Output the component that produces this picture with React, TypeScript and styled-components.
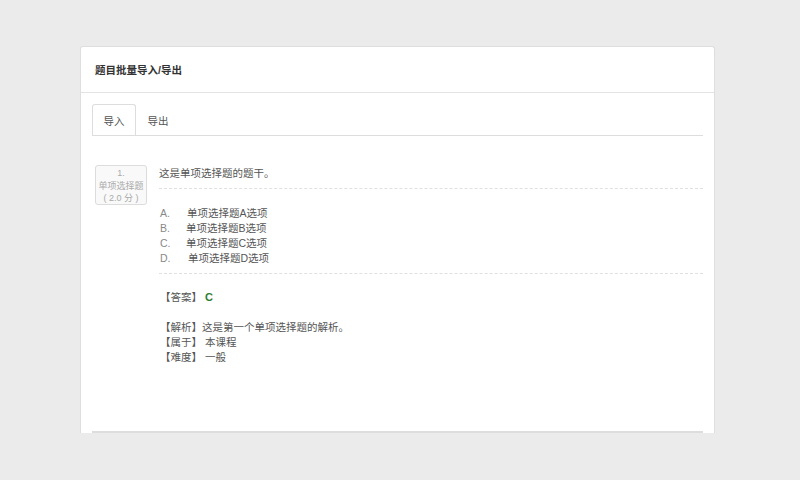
import React from 'react'
import styled, { createGlobalStyle } from 'styled-components'

const GlobalStyle = createGlobalStyle`
  html, body {
    margin: 0;
    padding: 0;
    background: #ebebeb;
    font-family: "Liberation Sans", "Noto Sans CJK SC", sans-serif;
  }
`

const Page = styled.div`
  width: 800px;
  height: 480px;
  padding: 46px 0 0 80px;
  box-sizing: border-box;
  overflow: hidden;
`

const Card = styled.div`
  width: 635px;
  height: 387px;
  background: #fff;
  border: 1px solid #dedede;
  border-bottom: none;
  border-radius: 3px 3px 0 0;
  box-sizing: border-box;
  display: flex;
  flex-direction: column;
`

const CardHeader = styled.div`
  height: 45px;
  line-height: 46px;
  padding-left: 14px;
  border-bottom: 1px solid #e3e3e3;
  font-size: 10.5px;
  font-weight: bold;
  color: #333;
`

const CardBody = styled.div`
  flex: 1;
  padding: 11px 11px 0 11px;
  display: flex;
  flex-direction: column;
`

const TabBar = styled.div`
  display: flex;
  height: 31px;
  border-bottom: 1px solid #dddddd;
`

const Tab = styled.div<{ $active?: boolean }>`
  width: 44px;
  height: ${p => (p.$active ? '31px' : '30px')};
  box-sizing: border-box;
  display: flex;
  align-items: center;
  justify-content: center;
  font-size: 10.5px;
  color: #555;
  background: #fff;
  border: 1px solid ${p => (p.$active ? '#dddddd' : 'transparent')};
  border-bottom: none;
  border-radius: 3px 3px 0 0;
  margin-bottom: ${p => (p.$active ? '-1px' : '0')};
  padding-top: 1px;
`

const Question = styled.div`
  display: flex;
  margin-top: 29px;
  margin-left: 3px;
  font-size: 10.5px;
  color: #555;
`

const Badge = styled.div`
  width: 52px;
  height: 40px;
  box-sizing: border-box;
  border: 1px solid #dcdcdc;
  border-radius: 3px;
  background: #f9f9f9;
  color: #aaa;
  font-size: 9px;
  line-height: 12.5px;
  text-align: center;
  padding-top: 1px;
  flex-shrink: 0;
`

const Content = styled.div`
  flex: 1;
  margin-left: 12px;
`

const Stem = styled.div`
  line-height: 15px;
  padding: 1px 0 7px;
  border-bottom: 1px dashed #e0e0e0;
`

const Options = styled.div`
  padding: 17px 0 7px 1px;
  border-bottom: 1px dashed #e0e0e0;
`

const Option = styled.div`
  display: flex;
  line-height: 15px;
`

const OptionKey = styled.span<{ $pad?: number }>`
  width: ${p => 27 + (p.$pad || 0)}px;
  color: #888;
`

const Details = styled.div`
  padding: 16px 0 0 1px;
  line-height: 15px;
`

const Line = styled.div<{ $gap?: boolean }>`
  margin-bottom: ${p => (p.$gap ? '15px' : '0')};
`

const AnswerValue = styled.span`
  color: #2f7d32;
  font-weight: bold;
  font-size: 11px;
  margin-left: 3px;
`

const Footer = styled.div`
  margin-top: auto;
  height: 2px;
  background: #dddddd;
`

const options = [
  { key: 'A.', text: '单项选择题A选项', pad: 0 },
  { key: 'B.', text: '单项选择题B选项', pad: -1 },
  { key: 'C.', text: '单项选择题C选项', pad: -1 },
  { key: 'D.', text: '单项选择题D选项', pad: 1 },
]

export default function App() {
  return (
    <Page>
      <GlobalStyle />
      <Card>
        <CardHeader>题目批量导入/导出</CardHeader>
        <CardBody>
          <TabBar>
            <Tab $active>导入</Tab>
            <Tab>导出</Tab>
          </TabBar>
          <Question>
            <Badge>
              1.
              <br />
              单项选择题
              <br />( 2.0 分 )
            </Badge>
            <Content>
              <Stem>这是单项选择题的题干。</Stem>
              <Options>
                {options.map(o => (
                  <Option key={o.key}>
                    <OptionKey $pad={o.pad}>{o.key}</OptionKey>
                    <span>{o.text}</span>
                  </Option>
                ))}
              </Options>
              <Details>
                <Line $gap>
                  【答案】<AnswerValue>C</AnswerValue>
                </Line>
                <Line>【解析】这是第一个单项选择题的解析。</Line>
                <Line>【属于】 本课程</Line>
                <Line>【难度】 一般</Line>
              </Details>
            </Content>
          </Question>
          <Footer />
        </CardBody>
      </Card>
    </Page>
  )
}
